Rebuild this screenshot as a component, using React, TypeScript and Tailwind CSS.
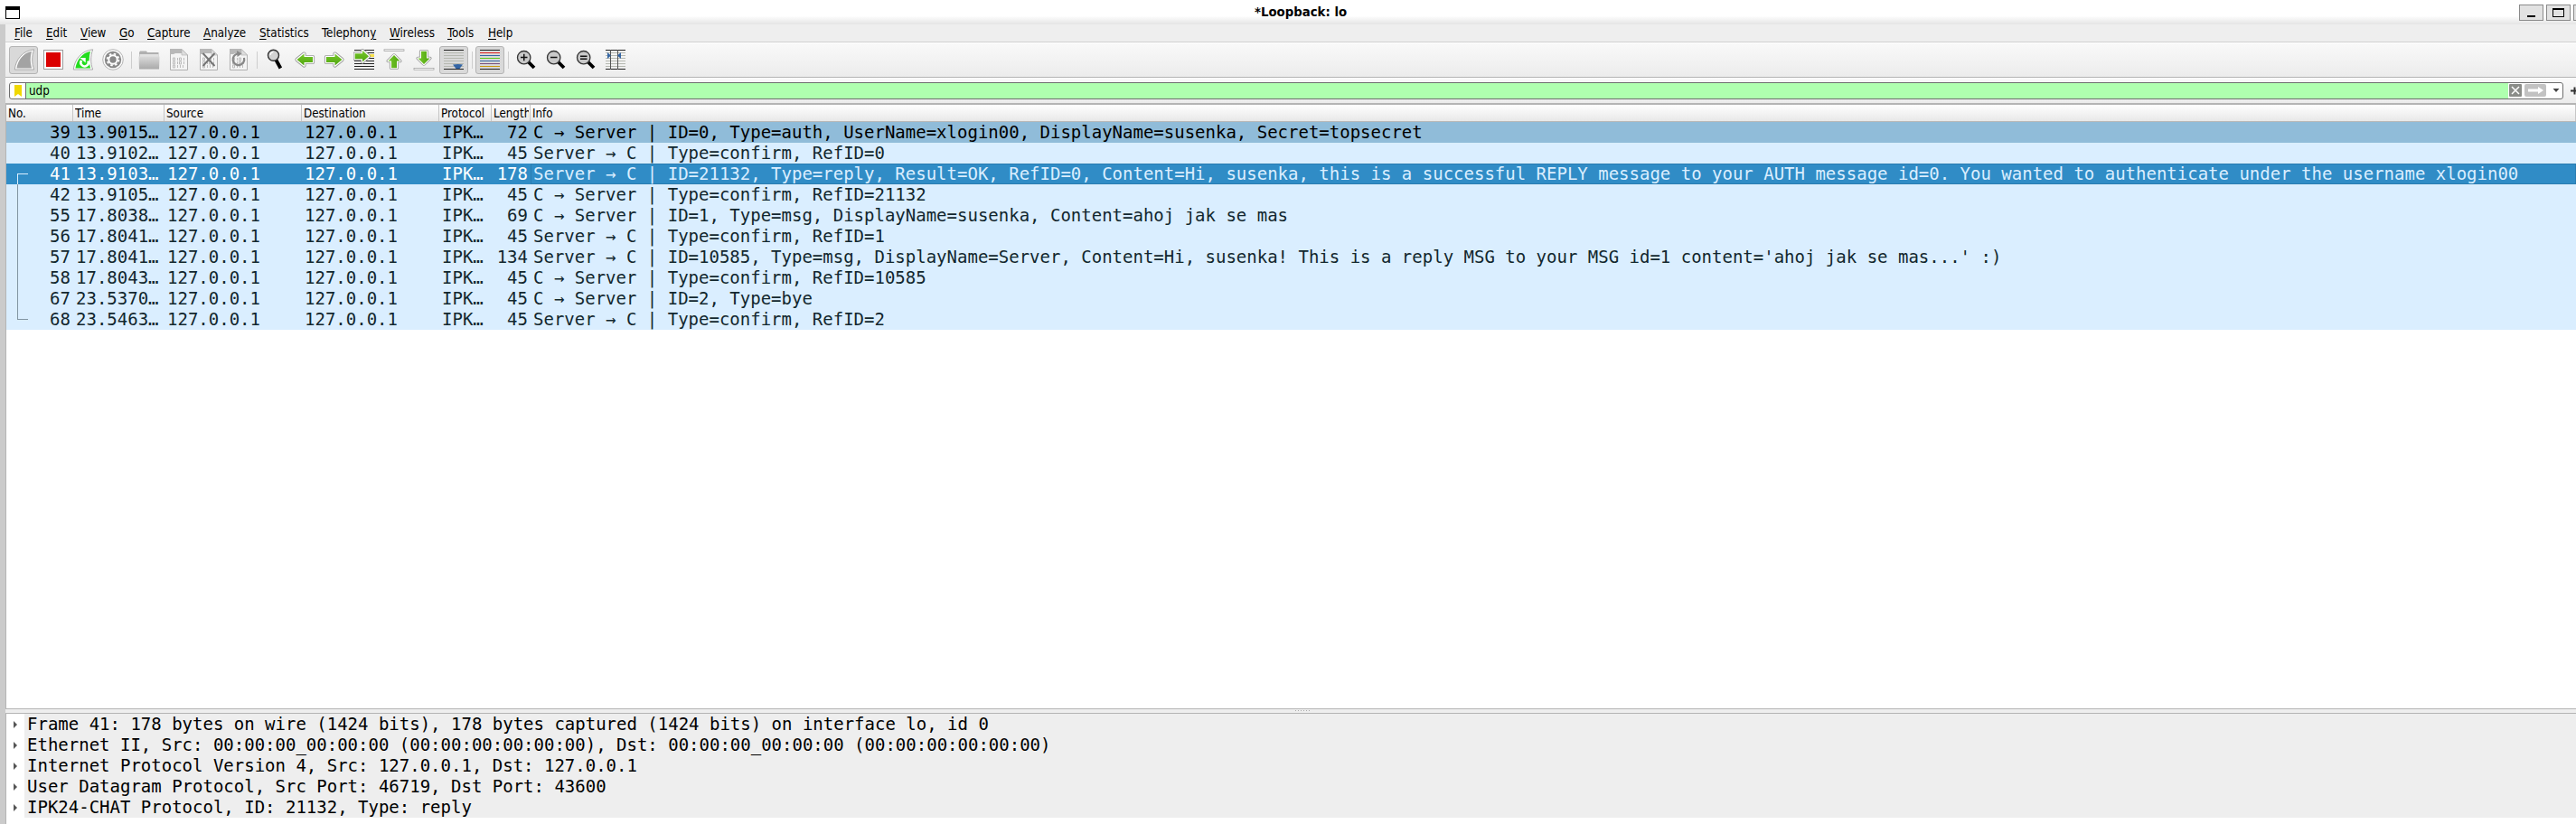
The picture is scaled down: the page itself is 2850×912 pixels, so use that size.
import React from "react";

type Packet = [string, string, string, string];

const packets: Packet[] = [
  ["39", "13.9015…", "72", "C → Server | ID=0, Type=auth, UserName=xlogin00, DisplayName=susenka, Secret=topsecret"],
  ["40", "13.9102…", "45", "Server → C | Type=confirm, RefID=0"],
  ["41", "13.9103…", "178", "Server → C | ID=21132, Type=reply, Result=OK, RefID=0, Content=Hi, susenka, this is a successful REPLY message to your AUTH message id=0. You wanted to authenticate under the username xlogin00"],
  ["42", "13.9105…", "45", "C → Server | Type=confirm, RefID=21132"],
  ["55", "17.8038…", "69", "C → Server | ID=1, Type=msg, DisplayName=susenka, Content=ahoj jak se mas"],
  ["56", "17.8041…", "45", "Server → C | Type=confirm, RefID=1"],
  ["57", "17.8041…", "134", "Server → C | ID=10585, Type=msg, DisplayName=Server, Content=Hi, susenka! This is a reply MSG to your MSG id=1 content='ahoj jak se mas...' :)"],
  ["58", "17.8043…", "45", "C → Server | Type=confirm, RefID=10585"],
  ["67", "23.5370…", "45", "C → Server | ID=2, Type=bye"],
  ["68", "23.5463…", "45", "Server → C | Type=confirm, RefID=2"],
];

const details = [
  "Frame 41: 178 bytes on wire (1424 bits), 178 bytes captured (1424 bits) on interface lo, id 0",
  "Ethernet II, Src: 00:00:00_00:00:00 (00:00:00:00:00:00), Dst: 00:00:00_00:00:00 (00:00:00:00:00:00)",
  "Internet Protocol Version 4, Src: 127.0.0.1, Dst: 127.0.0.1",
  "User Datagram Protocol, Src Port: 46719, Dst Port: 43600",
  "IPK24-CHAT Protocol, ID: 21132, Type: reply",
];

// [text before the mnemonic, mnemonic, text after, width class]
const menus: [string, string, string, string][] = [
  ["", "F", "ile", "w-[35px]"],
  ["", "E", "dit", "w-[38px]"],
  ["", "V", "iew", "w-[43px]"],
  ["", "G", "o", "w-[31px]"],
  ["", "C", "apture", "w-[62px]"],
  ["", "A", "nalyze", "w-[62px]"],
  ["", "S", "tatistics", "w-[69px]"],
  ["Telephon", "y", "", "w-[75px]"],
  ["", "W", "ireless", "w-[64px]"],
  ["", "T", "ools", "w-[45px]"],
  ["", "H", "elp", "w-[40px]"],
];

const columns: [string, string][] = [
  ["No.", "w-[74px]"],
  ["Time", "w-[101px]"],
  ["Source", "w-[152px]"],
  ["Destination", "w-[152px]"],
  ["Protocol", "w-[58px]"],
  ["Length", "w-[43px]"],
  ["Info", "w-[2263px]"],
];

function Icon({ children }: { children: React.ReactNode }) {
  return (
    <div className="w-[33px] h-[31px] shrink-0 pl-1 pt-[3px]">
      <svg width="24" height="24" viewBox="0 0 24 24">{children}</svg>
    </div>
  );
}

function Pressed({ children }: { children: React.ReactNode }) {
  return (
    <div className="w-8 h-[31px] shrink-0 pl-[3px] pt-0.5 rounded-[3px] border border-[#b4b4b4] bg-[#d9d9d9]">
      <svg width="24" height="24" viewBox="0 0 24 24">{children}</svg>
    </div>
  );
}

function Separator() {
  return <div className="w-px h-[19px] shrink-0 bg-[#cdcdcd]" />;
}

function Lines({ colors }: { colors: string[] }) {
  return (
    <>
      {colors.map((c, i) => (
        <rect key={i} x="1" y={1 + i * 3} width="22" height="1" fill={c} />
      ))}
    </>
  );
}

const arrowRight = "M3 9H12.5V5.5L20.5 12L12.5 18.5V15H3Z";

function Arrow({ transform }: { transform?: string }) {
  return (
    <g transform={transform} strokeLinejoin="round">
      <path d={arrowRight} fill="#fff" stroke="#999" strokeWidth="4.2" />
      <path d={arrowRight} fill="#fff" stroke="#fff" strokeWidth="2.4" />
      <path d={arrowRight} fill="url(#green)" />
    </g>
  );
}

function Fin({ body, children }: { body: string; children?: React.ReactNode }) {
  return (
    <g transform="translate(0.4 0) scale(1.06 1)">
      <path d="M0.8 23C2 12 9 2 21 0.8C18.5 8 18.5 16 21 23Z" fill="#fff" stroke="#a4a4a4" strokeWidth="0.9" />
      <path d="M2.8 21.4C4.5 12 10 4.5 18.5 2.8C16.8 9 16.8 15.5 18.6 21.4Z" fill={body} />
      {children}
    </g>
  );
}

function Sheet({ children }: { children?: React.ReactNode }) {
  return (
    <>
      <path d="M2.5 0.5H15L21.5 7V23.5H2.5Z" fill="#f4f4f4" stroke="#b0b0b0" />
      <path d="M2 0H15V5H8L6 6H2Z" fill="#b8b8b8" />
      <path d="M15 0.5V7H21.5Z" fill="#dedede" stroke="#b0b0b0" strokeWidth="0.6" />
      {[10, 14, 18].map((y, r) => (
        <path
          key={y}
          fill="none"
          stroke="#bcbcbc"
          strokeWidth="1"
          d={r === 2 ? `M5.5 ${y}h2v3h-2zM10.5 ${y}v3M13.5 ${y}v3M16.5 ${y}v3` : `M5.5 ${y}h2v3h-2zM10.5 ${y}v3M12.5 ${y}h2v3h-2zM17.5 ${y}v3`}
        />
      ))}
      {children}
    </>
  );
}

function Magnifier({ children }: { children?: React.ReactNode }) {
  return (
    <>
      <path d="M14.5 14.5L21 21" stroke="#000" strokeWidth="3.8" />
      <circle cx="9.7" cy="9.7" r="7.2" fill="#c9c9c9" stroke="#333" strokeWidth="1.3" />
      <g stroke="#111" strokeWidth="1.5">{children}</g>
    </>
  );
}

function Toolbar() {
  return (
    <div className="h-[38px] shrink-0 flex items-center pl-1 border-t border-white bg-linear-to-b from-[#f9f9f9] to-[#ececec]">
      <svg width="0" height="0" className="absolute">
        <defs>
          <linearGradient id="green" x1="0" y1="0" x2="0" y2="1">
            <stop offset="0" stopColor="#78c82c" />
            <stop offset="1" stopColor="#4fa40e" />
          </linearGradient>
          <linearGradient id="folder" x1="0" y1="0" x2="0" y2="1">
            <stop offset="0" stopColor="#dadada" />
            <stop offset="1" stopColor="#a9a9a9" />
          </linearGradient>
        </defs>
      </svg>
      <Pressed>
        <g transform="translate(1 0)"><Fin body="#a3a3a3" /></g>
      </Pressed>
      <div className="w-px shrink-0" />
      <Icon>
        <rect x="1.5" y="1.5" width="21" height="21" fill="#fff" stroke="#9c9c9c" />
        <rect x="4" y="4" width="16" height="16" fill="#db0000" />
      </Icon>
      <Icon>
        <Fin body="#23dc1e">
          <path d="M9.2 13A4 4 0 1 0 16 13.5" fill="none" stroke="#fff" strokeWidth="2.4" />
          <path d="M7.5 10H13.5V15.5Z" fill="#fff" />
        </Fin>
      </Icon>
      <Icon>
        <circle cx="12" cy="12" r="11.3" fill="#fafafa" stroke="#b4b4b4" />
        <circle cx="12" cy="12" r="9.2" fill="#888" />
        <circle cx="12" cy="12" r="4.7" fill="none" stroke="#fff" strokeWidth="2" />
        <circle cx="12" cy="12" r="6.4" fill="none" stroke="#fff" strokeWidth="1.8" strokeDasharray="2.51 2.51" />
      </Icon>
      <div className="w-[3px] shrink-0" />
      <Separator />
      <div className="w-[3px] shrink-0" />
      <Icon>
        <path d="M1 4L2 2.5H9L10 4H22.5V9H1Z" fill="#b0b0b0" />
        <path d="M1.5 6H22.5V9H1.5Z" fill="#e2e2e2" />
        <path d="M0.5 8.5H23.5L23 22.5H1Z" fill="url(#folder)" />
      </Icon>
      <Icon><Sheet /></Icon>
      <Icon>
        <Sheet><path d="M5.5 5L18.5 19M18.5 5L5.5 19" stroke="#747474" strokeWidth="1.9" /></Sheet>
      </Icon>
      <Icon>
        <Sheet>
          <path d="M11 5.5A6.3 6.3 0 1 0 18 10" fill="none" stroke="#888" strokeWidth="2.2" />
          <path d="M10 2L15.5 5.5L10.5 9Z" fill="#888" />
        </Sheet>
      </Icon>
      <div className="w-[3px] shrink-0" />
      <Separator />
      <div className="w-[3px] shrink-0" />
      <Icon>
        <path d="M13.2 12L18.4 21.5" stroke="#000" strokeWidth="3.8" />
        <circle cx="10.5" cy="7.2" r="6" fill="#d2d2d2" stroke="#333" strokeWidth="1.4" />
        <path d="M7 6.8A3.8 3.8 0 0 1 10.3 3.6" fill="none" stroke="#fff" strokeWidth="1.2" />
      </Icon>
      <Icon><Arrow transform="matrix(-1 0 0 1 24 0)" /></Icon>
      <Icon><Arrow /></Icon>
      <Icon>
        <Lines colors={["#222", "#222", "#222", "#222", "#222", "#222", "#222", "#222"]} />
        <rect x="15" y="6" width="8" height="3" fill="#f8e04a" />
        <Arrow transform="translate(-1 -3.4) scale(0.88 0.97)" />
      </Icon>
      <Icon>
        <rect x="1" y="0.8" width="22" height="1.8" fill="#fff" stroke="#999" strokeWidth="0.7" />
        <Arrow transform="matrix(0 -0.82 1 0 0 23.8)" />
      </Icon>
      <Icon>
        <Arrow transform="matrix(0 0.82 1 0 0 0.2)" />
        <rect x="1" y="21.4" width="22" height="1.8" fill="#fff" stroke="#999" strokeWidth="0.7" />
      </Icon>
      <Pressed>
        <Lines colors={["#222", "#b5b8b0", "#b5b8b0", "#b5b8b0", "#b5b8b0", "#b5b8b0", "#b5b8b0", "#222"]} />
        <path d="M11 17.5Q16.5 16.5 22 17.5L18.5 22H14.5Z" fill="#3465a4" />
      </Pressed>
      <div className="w-1 shrink-0" />
      <Separator />
      <div className="w-[3px] shrink-0" />
      <Pressed>
        <Lines colors={["#222", "#e02020", "#3465a4", "#5cc81c", "#3465a4", "#75507b", "#c99a10", "#222"]} />
      </Pressed>
      <div className="w-1 shrink-0" />
      <Separator />
      <div className="w-[3px] shrink-0" />
      <Icon><Magnifier><path d="M6 9.5H13.5M9.75 5.8V13.3" /></Magnifier></Icon>
      <Icon><Magnifier><path d="M6 9.5H13.5" /></Magnifier></Icon>
      <Icon><Magnifier><path d="M6 8.2H13.5M6 11.2H13.5" /></Magnifier></Icon>
      <Icon>
        <Lines colors={["#222", "#b5b8b0", "#b5b8b0", "#b5b8b0", "#b5b8b0", "#b5b8b0", "#b5b8b0", "#222"]} />
        <path d="M6.5 1V23M14.5 1V23" stroke="#555" />
        <path d="M3 4L7 7.5L3 11ZM18 4L14 7.5L18 11Z" fill="#3465a4" />
      </Icon>
    </div>
  );
}

export default function App() {
  return (
    <div className="w-[2850px] h-[912px] overflow-hidden flex flex-col bg-[#cbcbcb] text-black [font-family:'DejaVu_Sans_Condensed','DejaVu_Sans',sans-serif] [font-stretch:condensed]">
      <div className="h-[27px] shrink-0 flex items-center pl-1.5 bg-linear-to-b from-white from-65% to-[#e4e4e4]">
        <div className="w-4 h-3.5 shrink-0 border border-t-4 border-black bg-white" />
        <div className="w-[1366px] shrink-0" />
        <div className="w-[1399px] shrink-0 text-[13.3px] font-bold [font-family:'DejaVu_Sans',sans-serif] [font-stretch:normal]">*Loopback: lo</div>
        <div className="flex gap-[3px] shrink-0">
          <div className="w-[27px] h-[18px] shrink-0 border border-[#8a8a8a] bg-[#e2e2e2] flex justify-center items-end pb-[3px]">
            <div className="w-[9px] h-0.5 bg-black" />
          </div>
          <div className="w-[27px] h-[18px] shrink-0 border border-[#8a8a8a] bg-[#e2e2e2] flex justify-center items-center">
            <div className="w-[13px] h-2.5 border border-t-2 border-black" />
          </div>
          <div className="w-[27px] h-[18px] shrink-0 border border-[#8a8a8a] bg-[#e2e2e2]" />
        </div>
      </div>

      <div className="ml-1.5 flex-1 flex flex-col bg-[#eeeeee]">
        <div className="h-5 shrink-0 flex items-center pl-[10px] border-b border-[#d0d0d0] text-[13.3px]">
          {menus.map(([a, m, b, w]) => (
            <div key={m + b} className={`${w} shrink-0 whitespace-nowrap`}>
              {a}<span className="underline underline-offset-2 decoration-1">{m}</span>{b}
            </div>
          ))}
        </div>
        <Toolbar />
        <div className="h-[29px] shrink-0 flex items-start pl-1 pt-[5px] border-t border-[#b4b4b4] bg-linear-to-b from-[#fafafa] to-[#ececec]">
          <div className="w-[2826px] h-[19px] shrink-0 flex items-center rounded-[3px] border border-[#6e6e6e] bg-white overflow-hidden">
            <div className="w-[18px] h-full shrink-0 border-r border-[#6e6e6e] flex items-center justify-center">
              <svg width="8" height="13" viewBox="0 0 8 13"><path d="M0 0H8V13L4 10L0 13Z" fill="#f0d800" /></svg>
            </div>
            <div className="flex-1 h-full flex items-center pl-[3px] bg-[#afffaf] text-[13.3px]">udp</div>
            <svg className="shrink-0" width="60" height="17" viewBox="0 0 60 17">
              <rect x="1" y="1" width="14" height="14" rx="1" fill="#8a8c88" />
              <path d="M4 4L12 12M12 4L4 12" stroke="#fff" strokeWidth="1.5" />
              <rect x="18" y="1" width="24" height="14" rx="2" fill="#c2c2c2" />
              <path d="M22 6.5H33V4L39 8L33 12V9.5H22Z" fill="#fff" />
              <path d="M49.5 6H56.5L53 10Z" fill="#444" />
            </svg>
          </div>
          <svg className="ml-2 mt-[5px] shrink-0" width="8" height="9" viewBox="0 0 8 9"><path d="M0 4.5H8M4.5 0.5V8.5" stroke="#333" strokeWidth="2" /></svg>
        </div>

        <div className="h-[671px] shrink-0 flex flex-col border-t-2 border-b border-l border-[#b4b4b4] bg-white">
          <div className="h-[19px] shrink-0 flex border-b border-[#b8b8b8] bg-linear-to-b from-white to-[#e8e8e8] text-[13.3px] leading-[19px]">
            {columns.map(([name, w]) => (
              <div key={name} className={`${w} h-full shrink-0 pl-0.5 pr-px border-r border-[#c6c6c6]`}>
                <div className="h-full overflow-hidden whitespace-nowrap">{name}</div>
              </div>
            ))}
          </div>
          <div className="relative font-['DejaVu_Sans_Mono',monospace] [font-stretch:normal] text-[19px] leading-[23px] whitespace-pre">
            {packets.map(([no, time, len, info], i) => (
              <div
                key={no}
                className={`h-[23px] flex ${i === 0 ? "bg-[#90bcd9] text-black" : i === 2 ? "bg-[#308cc6] text-white" : "bg-[#daeeff] text-[#12272e]"}`}
              >
                <div className="w-[71px] shrink-0 text-right">{no}</div>
                <div className="w-[101px] shrink-0 pl-1.5">{time}</div>
                <div className="w-[152px] shrink-0 pl-1.5">127.0.0.1</div>
                <div className="w-[152px] shrink-0 pl-1.5">127.0.0.1</div>
                <div className="w-[58px] shrink-0 pl-1.5">IPK…</div>
                <div className="w-[43px] shrink-0 text-right">{len}</div>
                <div className={`flex-1 ml-[3px] pl-[3px] ${i === 2 ? "text-[#daeeff] shadow-[inset_0_0_0_1px_#2a7cb0]" : ""}`}>{info}</div>
              </div>
            ))}
            <div className="absolute left-3 top-[57px] w-3 h-[162px] border-l border-y border-[#8295a3]" />
            <div className="absolute left-3 top-[57px] w-3 h-3 border-l border-t border-[#daeeff]" />
          </div>
        </div>

        <div className="h-1 shrink-0 flex items-start pt-px pl-[1427px] gap-0.5">
          {[0, 1, 2, 3, 4, 5].map((i) => <div key={i} className="size-px bg-[#aaa]" />)}
        </div>

        <div className="flex-1 border-t border-l border-[#b4b4b4] bg-white font-['DejaVu_Sans_Mono',monospace] [font-stretch:normal] text-[19px] leading-[23px] whitespace-pre">
          {details.map((d) => (
            <div key={d} className="h-[23px] flex items-center">
              <div className="w-5 shrink-0 pl-2">
                <svg width="4" height="8" viewBox="0 0 4 8"><path d="M0 0L4 4L0 8Z" fill="#555" /></svg>
              </div>
              <div className="flex-1 h-full pl-[3px] bg-[#eeeeee]">{d}</div>
            </div>
          ))}
        </div>
      </div>
    </div>
  );
}
